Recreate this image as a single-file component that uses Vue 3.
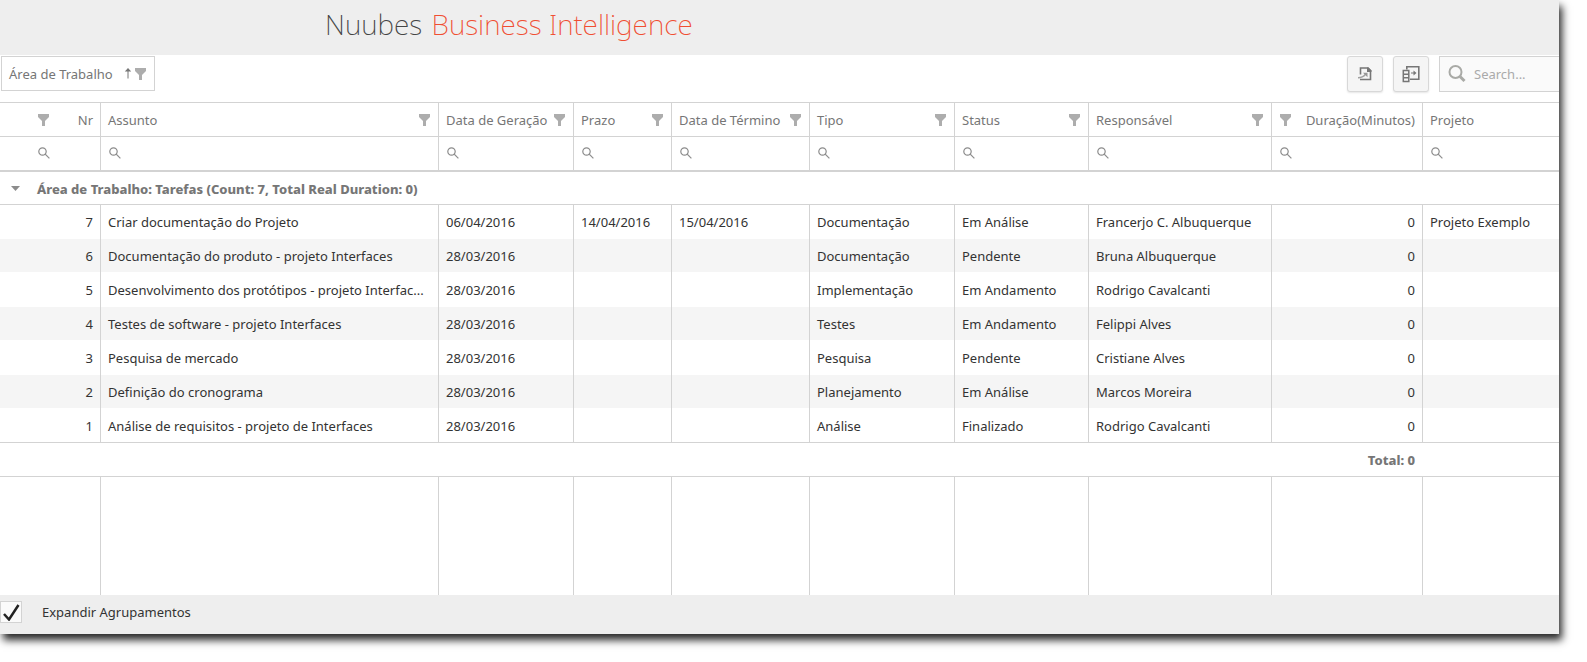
<script setup>
import { ref } from 'vue'

const columns = [
  { key: 'nr', label: 'Nr', numeric: true, filter: true },
  { key: 'assunto', label: 'Assunto', filter: true },
  { key: 'geracao', label: 'Data de Geração', filter: true },
  { key: 'prazo', label: 'Prazo', filter: true },
  { key: 'termino', label: 'Data de Término', filter: true },
  { key: 'tipo', label: 'Tipo', filter: true },
  { key: 'status', label: 'Status', filter: true },
  { key: 'responsavel', label: 'Responsável', filter: true },
  { key: 'duracao', label: 'Duração(Minutos)', numeric: true, filter: true },
  { key: 'projeto', label: 'Projeto', filter: false },
]

const rows = [
  { nr: 7, assunto: 'Criar documentação do Projeto', geracao: '06/04/2016', prazo: '14/04/2016', termino: '15/04/2016', tipo: 'Documentação', status: 'Em Análise', responsavel: 'Francerjo C. Albuquerque', duracao: 0, projeto: 'Projeto Exemplo' },
  { nr: 6, assunto: 'Documentação do produto - projeto Interfaces', geracao: '28/03/2016', tipo: 'Documentação', status: 'Pendente', responsavel: 'Bruna Albuquerque', duracao: 0 },
  { nr: 5, assunto: 'Desenvolvimento dos protótipos - projeto Interfac...', geracao: '28/03/2016', tipo: 'Implementação', status: 'Em Andamento', responsavel: 'Rodrigo Cavalcanti', duracao: 0 },
  { nr: 4, assunto: 'Testes de software - projeto Interfaces', geracao: '28/03/2016', tipo: 'Testes', status: 'Em Andamento', responsavel: 'Felippi Alves', duracao: 0 },
  { nr: 3, assunto: 'Pesquisa de mercado', geracao: '28/03/2016', tipo: 'Pesquisa', status: 'Pendente', responsavel: 'Cristiane Alves', duracao: 0 },
  { nr: 2, assunto: 'Definição do cronograma', geracao: '28/03/2016', tipo: 'Planejamento', status: 'Em Análise', responsavel: 'Marcos Moreira', duracao: 0 },
  { nr: 1, assunto: 'Análise de requisitos - projeto de Interfaces', geracao: '28/03/2016', tipo: 'Análise', status: 'Finalizado', responsavel: 'Rodrigo Cavalcanti', duracao: 0 },
]

const expanded = ref(true)
</script>

<template>
  <main class="panel">
    <header class="banner">
      <h1 class="title">Nuubes <span class="accent">Business Intelligence</span></h1>
    </header>

    <div class="toolbar">
      <button type="button" class="group-chip">
        <span>Área de Trabalho</span>
        <svg class="sort" width="8" height="12" viewBox="0 0 8 12" aria-hidden="true"><path d="M4 10.500V2" fill="none" stroke="#767676" /><path d="M4 0l3.200 3.500H.8z" fill="#767676" /></svg>
        <svg class="funnel" width="11" height="12" viewBox="0 0 11 12" aria-hidden="true"><path d="M0 0h11v3L7 7v5H4V7L0 3z" /></svg>
      </button>
      <div class="tools">
        <button type="button" class="tool" aria-label="Exportar">
          <svg width="18" height="18" viewBox="0 0 18 18" aria-hidden="true">
            <path d="M4.500 9.500V3H12l2.500 2.500V14.500H4" fill="none" stroke="#767676" stroke-width="1.600" />
            <path d="M11 2.500h1.500l3 3V7H11z" fill="#767676" />
            <path d="M2 12.800c3 0 5.500-1 7.500-3.500" fill="none" stroke="#a0a0a0" stroke-width="1.600" />
            <path d="M7 7.800h4.500v4.500z" fill="#969696" />
          </svg>
        </button>
        <button type="button" class="tool" aria-label="Selecionar colunas">
          <svg width="18" height="18" viewBox="0 0 18 18" aria-hidden="true">
            <path d="M4.800 4.500V1.800h12v12.400H8" fill="none" stroke="#767676" stroke-width="1.600" />
            <path d="M1.300 5.500h5.500v11H1.300zM1.300 9.200h5.500M1.300 12.800h5.500" fill="none" stroke="#767676" stroke-width="1.500" />
            <path d="M9 8h4" stroke="#767676" />
            <path d="M11.500 5.500l3 2.500-3 2.500z" fill="#767676" />
          </svg>
        </button>
        <label class="search">
          <svg width="18" height="18" viewBox="0 0 18 18" aria-hidden="true"><circle cx="7.500" cy="7" r="6" /><path d="M12 11.500l4.500 4.500" stroke-width="3" /></svg>
          <input type="search" placeholder="Search..." aria-label="Search" />
        </label>
      </div>
    </div>

    <table class="grid">
      <colgroup>
        <col class="c-expand" />
        <col v-for="c in columns" :key="c.key" :class="'c-' + c.key" />
      </colgroup>
      <thead>
        <tr class="heads">
          <td class="bare"></td>
          <th v-for="c in columns" :key="c.key" scope="col">
            <div class="head" :class="{ reverse: c.numeric }">
              <span>{{ c.label }}</span>
              <svg v-if="c.filter" class="funnel" width="11" height="12" viewBox="0 0 11 12" aria-hidden="true"><path d="M0 0h11v3L7 7v5H4V7L0 3z" /></svg>
            </div>
          </th>
        </tr>
        <tr class="filters">
          <td class="bare"></td>
          <td v-for="c in columns" :key="c.key">
            <label class="filter">
              <svg width="12" height="12" viewBox="0 0 12 12" aria-hidden="true"><circle cx="4.500" cy="4.500" r="3.700" /><path d="M7.200 7.200l4.200 4.200" /></svg>
              <input type="text" :aria-label="'Filtrar ' + c.label" />
            </label>
          </td>
        </tr>
      </thead>
      <tbody>
        <tr class="group">
          <td class="bare">
            <button type="button" class="toggle" aria-label="Recolher grupo">
              <svg width="9" height="5" viewBox="0 0 9 5" aria-hidden="true"><path d="M0 0h9L4.500 5z" /></svg>
            </button>
          </td>
          <td class="bare" colspan="10">Área de Trabalho: Tarefas (Count: 7, Total Real Duration: 0)</td>
        </tr>
        <tr v-for="r in rows" :key="r.nr" class="row">
          <td class="bare"></td>
          <td v-for="c in columns" :key="c.key" :class="{ num: c.numeric }">{{ r[c.key] }}</td>
        </tr>
        <tr class="total">
          <td class="bare" colspan="9"></td>
          <td class="bare num">Total: 0</td>
          <td class="bare"></td>
        </tr>
        <tr class="rest">
          <td class="bare"></td>
          <td v-for="c in columns" :key="c.key"></td>
        </tr>
      </tbody>
    </table>

    <footer class="footer">
      <label class="expand">
        <span class="box">
          <input v-model="expanded" type="checkbox" />
          <svg v-if="expanded" width="18" height="18" viewBox="0 0 18 18" aria-hidden="true"><path d="M2 11l5 5.500L16.500 2" /></svg>
        </span>
        <span>Expandir Agrupamentos</span>
      </label>
    </footer>
  </main>
</template>

<style>
body {
  background: #fff;
}
</style>

<style scoped>
.panel {
  margin: 0 28px 28px 0;
  background: #fff;
  box-shadow: 3px 6px 8px rgba(0, 0, 0, 0.85);
  color: #333;
  font: 13px/18px "Noto Sans", "Open Sans", sans-serif;
}
.panel * {
  box-sizing: border-box;
}
svg {
  display: block;
  flex: none;
}
button,
input {
  font: inherit;
  color: inherit;
}
.banner {
  height: 55px;
  padding: 4px 0 0 325px;
  background: #eee;
}
.title {
  margin: 0;
  font-size: 28px;
  line-height: 40px;
  font-weight: 200;
  color: #444;
  white-space: nowrap;
}
.accent {
  margin-left: 2px;
  color: #f04e32;
}
.toolbar {
  display: flex;
  justify-content: space-between;
  align-items: flex-start;
  height: 47px;
  padding: 1px 0 0 1px;
}
.group-chip {
  display: flex;
  align-items: center;
  height: 35px;
  padding: 0 8px 0 7px;
  border: 1px solid #d3d3d3;
  background: #fff;
  color: #767676;
}
.sort {
  margin: 0 3px 0 11px;
}
.funnel {
  fill: #adadad;
}
.tools {
  display: flex;
  gap: 10px;
}
.tool {
  display: grid;
  place-items: center;
  width: 36px;
  height: 36px;
  padding: 0;
  border: 1px solid #d8d8d8;
  border-radius: 3px;
  background: #f5f5f5;
  box-shadow: 0 1px 2px rgba(0, 0, 0, 0.1);
}
.search {
  display: flex;
  align-items: center;
  gap: 8px;
  width: 120px;
  height: 36px;
  padding-left: 8px;
  border: 1px solid #d3d3d3;
  border-right: 0;
  background: #fafafa;
}
.search svg {
  fill: none;
  stroke: #a9aaa6;
  stroke-width: 2;
}
.search input {
  width: 100%;
  min-width: 0;
  padding: 0;
  border: 0;
  outline: 0;
  background: none;
}
.search input::placeholder {
  color: #aaa;
  opacity: 1;
}
.grid {
  width: 100%;
  table-layout: fixed;
  border-collapse: separate;
  border-spacing: 0;
}
.c-expand { width: 30px; }
.c-nr { width: 70px; }
.c-geracao { width: 135px; }
.c-prazo { width: 98px; }
.c-termino { width: 138px; }
.c-tipo { width: 145px; }
.c-status { width: 134px; }
.c-responsavel { width: 183px; }
.c-duracao { width: 151px; }
.c-projeto { width: 137px; }
.grid th,
.grid td {
  height: 34px;
  padding: 0 7px;
  border-bottom: 1px solid #d3d3d3;
  border-left: 1px solid #d3d3d3;
  background-clip: padding-box;
  font-weight: 400;
  text-align: left;
  white-space: nowrap;
  overflow: hidden;
  text-overflow: ellipsis;
}
.grid .bare,
.grid .bare + th,
.grid .bare + td {
  border-left: 0;
}
.heads th,
.heads td {
  height: 35px;
  border-top: 1px solid #d3d3d3;
  color: #767676;
}
.head {
  display: flex;
  align-items: center;
  justify-content: space-between;
  padding-right: 1px;
}
.head.reverse {
  flex-direction: row-reverse;
  padding: 0 0 0 1px;
}
.grid .filters td {
  height: 35px;
  padding-bottom: 2px;
  border-bottom-width: 2px;
}
.filter {
  display: flex;
  align-items: center;
  gap: 4px;
}
.filter svg {
  margin-left: 1px;
  fill: none;
  stroke: #8c8c8c;
  stroke-width: 1.2;
}
.filter input {
  flex: 1;
  min-width: 0;
  height: 24px;
  padding: 0;
  border: 0;
  outline: 0;
  background: none;
}
.grid .group td,
.grid .total td {
  font-weight: 800;
  color: #767676;
}
.grid .group td {
  height: 33px;
  padding-top: 1px;
}
.toggle {
  display: grid;
  place-items: center;
  width: 17px;
  height: 24px;
  padding: 0;
  border: 0;
  background: none;
}
.toggle svg {
  fill: #8c8c8c;
}
.grid .row td {
  border-bottom-color: #fff;
}
.row:nth-child(odd) td {
  background: #f5f5f5;
}
.grid .row:nth-child(8) td {
  border-bottom-color: #d3d3d3;
}
.grid .row td:not(.bare) {
  border-bottom-width: 0;
  box-shadow: inset 0 -1px #fff;
}
.grid .row:nth-child(8) td:not(.bare) {
  box-shadow: inset 0 -1px #d3d3d3;
}
.grid .num {
  text-align: right;
}
.grid .rest td {
  height: 118px;
  border-bottom: 0;
}
.footer {
  padding: 6px 0 11px;
  background: #eee;
}
.expand {
  display: flex;
  align-items: center;
  gap: 20px;
}
.box {
  display: grid;
  place-items: center;
}
.box > * {
  grid-area: 1 / 1;
}
.box input {
  appearance: none;
  width: 22px;
  height: 22px;
  margin: 0;
  border: 1px solid #d3d3d3;
  background: #fafafa;
}
.box svg {
  fill: none;
  stroke: #222;
  stroke-width: 2.500;
  pointer-events: none;
}
</style>
